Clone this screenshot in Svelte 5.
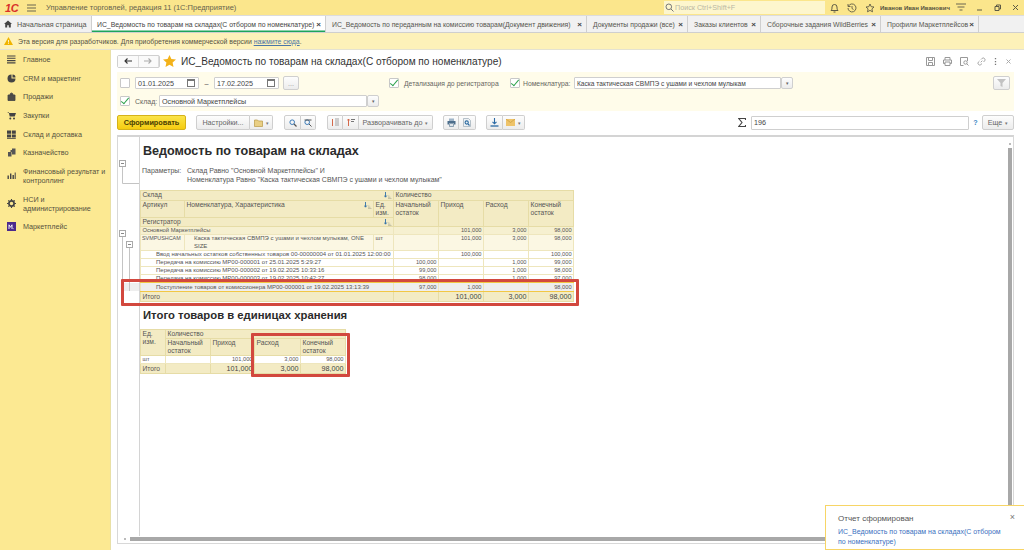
<script>
  const tabs = [
    { name: 'ИС_Ведомость по товарам на складах(С отбором по номенклатуре)', width: 234, active: true },
    { name: 'ИС_Ведомость по переданным на комиссию товарам(Документ движения)', width: 261 },
    { name: 'Документы продажи (все)', width: 101 },
    { name: 'Заказы клиентов', width: 73 },
    { name: 'Сборочные задания WildBerries', width: 120 },
    { name: 'Профили Маркетплейсов', width: 98 }
  ];
  const menu = [
    { id: 'main', lines: ['Главное'] },
    { id: 'crm', lines: ['CRM и маркетинг'] },
    { id: 'sales', lines: ['Продажи'] },
    { id: 'buy', lines: ['Закупки'] },
    { id: 'stock', lines: ['Склад и доставка'] },
    { id: 'cash', lines: ['Казначейство'] },
    { id: 'fin', lines: ['Финансовый результат и', 'контроллинг'] },
    { id: 'nsi', lines: ['НСИ и', 'администрирование'] },
    { id: 'mp', lines: ['Маркетплейс'] }
  ];
  const moves = [
    { name: 'Ввод начальных остатков собственных товаров 00-00000004 от 01.01.2025 12:00:00', start: '', inc: '100,000', out: '', end: '100,000' },
    { name: 'Передача на комиссию МР00-000001 от 25.01.2025 5:29:27', start: '100,000', inc: '', out: '1,000', end: '99,000' },
    { name: 'Передача на комиссию МР00-000002 от 19.02.2025 10:33:16', start: '99,000', inc: '', out: '1,000', end: '98,000' },
    { name: 'Передача на комиссию МР00-000003 от 19.02.2025 10:42:27', start: '98,000', inc: '', out: '1,000', end: '97,000' }
  ];
</script>

{#snippet sortIcon()}
  <svg class="sort" width="8" height="7" viewBox="0 0 8 7"><path d="M1.500 0v5M.2 3.500l1.300 1.700 1.300-1.700" fill="none" stroke="#2f6fa8" stroke-width=".9"/><path d="M4 4h1.500M4 5.300h2.500M4 6.500h3.500" stroke="#b5b39a" stroke-width=".7"/></svg>
{/snippet}

<div class="page">
  <header class="titlebar">
    <span class="logo">1С</span>
    <svg class="burger" width="9" height="8" viewBox="0 0 9 8"><path d="M0 1h9M0 4h9M0 7h9" stroke="#6b6750" stroke-width="1"/></svg>
    <span class="apptitle">Управление торговлей, редакция 11 (1С:Предприятие)</span>
    <div class="search">
      <svg width="9" height="9" viewBox="0 0 9 9"><circle cx="3.800" cy="3.800" r="2.800" fill="none" stroke="#777" stroke-width="1"/><path d="M6 6l2.500 2.500" stroke="#777"/></svg>
      <span>Поиск Ctrl+Shift+F</span>
    </div>
    <div class="sysicons">
      <svg width="9" height="10" viewBox="0 0 9 10"><path d="M1 7.500c1-1 1-2 1-3.500a2.500 2.500 0 0 1 5 0c0 1.500 0 2.500 1 3.500zM3.500 9h2" fill="none" stroke="#5d5a45"/></svg>
      <svg width="10" height="10" viewBox="0 0 10 10"><path d="M1.500 3a4 4 0 1 1-.5 2M1 1v2.500h2.500M5 3v2.500l1.500 1" fill="none" stroke="#5d5a45" stroke-width=".9"/></svg>
      <svg width="10" height="10" viewBox="0 0 10 10"><path d="M5 1l1.200 2.700 2.800.3-2.100 1.900.6 2.900L5 7.400 2.500 8.800l.6-2.900L1 4l2.800-.3z" fill="none" stroke="#5d5a45" stroke-width=".9"/></svg>
      <span class="user">Иванов Иван Иванович</span>
      <svg width="10" height="9" viewBox="0 0 10 9"><path d="M0 1h10M1.500 4h7M3.500 7h3" stroke="#6b6750"/></svg>
      <span class="winbtns">
        <svg width="7" height="7" viewBox="0 0 7 7"><path d="M1 6h5" stroke="#5d5a45"/></svg>
        <svg width="7" height="7" viewBox="0 0 7 7"><path d="M1 2.500h4v4H1zM2.500 2.500V1h4v4H5" fill="none" stroke="#5d5a45"/></svg>
        <svg width="7" height="7" viewBox="0 0 7 7"><path d="M1 1l5 5M6 1L1 6" stroke="#5d5a45"/></svg>
      </span>
    </div>
  </header>

  <nav class="tabs">
    <div class="tab home" style="width:92px">
      <svg width="8" height="8" viewBox="0 0 8 8"><path d="M4 .5L0 4h1.200v3.500h2V5.200h1.600v2.300h2V4H8z" fill="#444"/></svg>
      <span>Начальная страница</span>
    </div>
    {#each tabs as tab}
      <div class="tab" class:active={tab.active} style="width:{tab.width}px">
        <span>{tab.name}</span><b class="x">×</b>
      </div>
    {/each}
  </nav>

  <div class="notice">
    <svg width="9" height="8" viewBox="0 0 9 8"><path d="M4.500 0L9 8H0z" fill="#f0b400"/><path d="M4.500 3v2.500M4.500 6.200v.8" stroke="#fff" stroke-width=".8"/></svg>
    <span>Эта версия для разработчиков. Для приобретения коммерческой версии <a href="#top">нажмите сюда</a>.</span>
  </div>

  <div class="body">
    <aside class="sidebar">
      {#each menu as item}
        <div class="menuitem">
          <svg class="micon" width="9" height="9" viewBox="0 0 9 9">
            {#if item.id === 'main'}
              <path d="M0 1h8.500M0 3.300h8.500M0 5.600h8.500M0 7.900h8.500" stroke="#444" stroke-width="1.100"/>
            {:else if item.id === 'crm'}
              <path d="M4.500 .5a4 4 0 1 0 4 4h-4z" fill="#444"/><path d="M5.500 .5a3 3 0 0 1 3 3h-3z" fill="#444"/>
            {:else if item.id === 'sales'}
              <path d="M1 3h7v5.500H1zM3 3a1.500 2 0 0 1 3 0" fill="#444" stroke="#444" stroke-width=".8" fill-opacity=".95"/>
            {:else if item.id === 'buy'}
              <path d="M0 1h1.700l1 4.500h5L9 2H2.300z" fill="#444"/><circle cx="3.300" cy="7.500" r="1" fill="#444"/><circle cx="7" cy="7.500" r="1" fill="#444"/>
            {:else if item.id === 'stock'}
              <path d="M0 .5h4v3.300H0zM4.800.5h4v3.300h-4zM0 4.500h4v3H0zM4.800 4.500h4v3h-4z" fill="#444"/><path d="M0 8.500h8.800" stroke="#444" stroke-width=".8"/>
            {:else if item.id === 'cash'}
              <path d="M1 4h3.500v4.500H1zM3.500 2h3v2h-3zM5 .5h3.500v6H5z" fill="#555"/>
            {:else if item.id === 'fin'}
              <path d="M.5 4.500h1.400V8H.5zM3 2.500h1.400V8H3zM5.500 4h1.400v4H5.500zM7.700 1.500h1V8h-1z" fill="#444"/>
            {:else if item.id === 'nsi'}
              <circle cx="4.500" cy="4.500" r="2.600" fill="none" stroke="#444" stroke-width="1.700"/><path d="M4.500 0v1.500M4.500 7.500V9M0 4.500h1.500M7.500 4.500H9M1.300 1.300l1 1M6.700 6.700l1 1M7.700 1.300l-1 1M2.300 6.700l-1 1" stroke="#444" stroke-width="1.100"/>
            {:else}
              <rect width="9" height="9" fill="#4b2a8c"/><path d="M2 7V2.800l1.500 2.500L5 2.800V7M6.300 6.500v.6" stroke="#fff" stroke-width=".9" fill="none"/>
            {/if}
          </svg>
          <span class="mtext">
            {#each item.lines as line}
              <span>{line}</span>
            {/each}
          </span>
        </div>
      {/each}
    </aside>

    <main class="content">
      <div class="formhead">
        <div class="navbtns">
          <button class="nb"><svg width="8" height="6" viewBox="0 0 8 6"><path d="M8 3H1.500M3.500 .5L1 3l2.500 2.500" fill="none" stroke="#333" stroke-width="1.100"/></svg></button>
          <button class="nb"><svg width="8" height="6" viewBox="0 0 8 6"><path d="M0 3h6.500M4.500 .5L7 3 4.500 5.500" fill="none" stroke="#aaa" stroke-width="1.100"/></svg></button>
        </div>
        <svg class="star" width="13" height="12" viewBox="0 0 13 12"><path d="M6.500 0l1.900 4 4.600.5-3.400 3 .9 4.500-4-2.300L2.500 12l.9-4.500L0 4.500 4.600 4z" fill="#f3b21a"/></svg>
        <h1>ИС_Ведомость по товарам на складах(С отбором по номенклатуре)</h1>
        <div class="formicons">
          <svg width="9" height="9" viewBox="0 0 9 9"><path d="M.5.500h8v8h-8zM2.500.500v3h4v-3M2.500 8.500v-3h4v3" fill="none" stroke="#999"/></svg>
          <svg width="9" height="9" viewBox="0 0 9 9"><path d="M2 3V.5h5V3M2 6.500H.5V3h8v3.500H7M2 5h5v3.500H2z" fill="none" stroke="#999"/></svg>
          <svg width="9" height="9" viewBox="0 0 9 9"><path d="M7.500 4V.5h-7v8h3" fill="none" stroke="#999"/><circle cx="5.500" cy="5.500" r="1.700" fill="none" stroke="#999"/><path d="M6.700 6.700l1.800 1.800" stroke="#999"/></svg>
          <svg width="9" height="9" viewBox="0 0 9 9"><path d="M3.700 5.300l1.600-1.600M4 2.500l1.200-1.200a1.800 1.800 0 0 1 2.500 2.500L6.500 5M5 6.500L3.800 7.700a1.800 1.800 0 0 1-2.500-2.500L2.500 4" fill="none" stroke="#999" stroke-width=".9"/></svg>
          <svg width="3" height="9" viewBox="0 0 3 9"><path d="M1.500 1v1.300M1.500 3.900v1.300M1.500 6.700V8" stroke="#777" stroke-width="1.300"/></svg>
          <svg width="7" height="7" viewBox="0 0 7 7"><path d="M1.500 1.500l4 4M5.500 1.500l-4 4" stroke="#aaa"/></svg>
        </div>
      </div>

      <section class="filters">
        <div class="frow r1">
          <span class="cb"></span>
          <div class="input date"><span>01.01.2025</span><i class="cal"></i></div>
          <span class="dash">–</span>
          <div class="input date"><span>17.02.2025</span><i class="cal"></i></div>
          <button class="btn dots">...</button>
          <span class="cb on det"></span>
          <span class="lbl detl">Детализация до регистратора</span>
          <span class="cb on tight"></span>
          <span class="lbl noml">Номенклатура:</span>
          <div class="input nom"><span>Каска тактическая СВМПЭ с ушами и чехлом мулыкам</span></div>
          <button class="btn dd">▾</button>
          <button class="btn funnel"><svg width="9" height="8" viewBox="0 0 9 8"><path d="M0 0h9L5.500 4v4L3.500 7V4z" fill="#c2c2c2"/></svg></button>
        </div>
        <div class="frow r2">
          <span class="cb on"></span>
          <span class="lbl skl">Склад:</span>
          <div class="input wh"><span>Основной Маркетплейсы</span></div>
          <button class="btn dd">▾</button>
        </div>
      </section>

      <div class="toolbar">
        <button class="btn primary">Сформировать</button>
        <div class="group g1">
          <button class="btn set">Настройки...</button>
          <button class="btn ic w23"><svg width="9" height="9" viewBox="0 0 9 9"><path d="M.5 2h3l1 1h4v5.500h-8z" fill="#e9cf85" stroke="#b99a45" stroke-width=".7"/></svg><em>▾</em></button>
        </div>
        <div class="group g2">
          <button class="btn ic w17"><svg width="8" height="8" viewBox="0 0 8 8"><circle cx="3.200" cy="3.200" r="2.300" fill="none" stroke="#3a7ab8"/><path d="M5 5l2.500 2.500" stroke="#555" stroke-width="1.200"/></svg></button>
          <button class="btn ic w15"><svg width="8" height="8" viewBox="0 0 8 8"><circle cx="3.200" cy="3.200" r="2.300" fill="none" stroke="#3a7ab8"/><path d="M5 5l2.500 2.500M.5 1h7" stroke="#555"/></svg></button>
        </div>
        <div class="group g3">
          <button class="btn ic w13"><svg width="8" height="9" viewBox="0 0 8 9"><path d="M1.500 1v7" stroke="#d4694a"/><path d="M4 1h4M4 3h4M4 5h4M4 7h4" stroke="#999" stroke-width=".9"/></svg></button>
          <button class="btn ic w13"><svg width="8" height="9" viewBox="0 0 8 9"><path d="M1.500 8V1M.2 2.500L1.500 1l1.300 1.500" fill="none" stroke="#d4694a"/><path d="M4 1.500h4M4 3.500h3" stroke="#777"/></svg></button>
          <button class="btn exp">Разворачивать до<em>▾</em></button>
        </div>
        <div class="group g4">
          <button class="btn ic w16"><svg width="9" height="9" viewBox="0 0 9 9"><path d="M2 3V.5h5V3z" fill="#9fb4c8"/><path d="M.5 3h8v3.500H7V5H2v1.500H.5z" fill="#4d6e8c"/><path d="M2.500 5.500h4v3h-4z" fill="#dfe5ea" stroke="#4d6e8c" stroke-width=".6"/></svg></button>
          <button class="btn ic w17"><svg width="8" height="9" viewBox="0 0 8 9"><path d="M.5.500h5l2 2v6h-7z" fill="#eef2f5" stroke="#9aa9b5" stroke-width=".7"/><circle cx="3.700" cy="4.500" r="1.600" fill="none" stroke="#2c6aa0" stroke-width="1.100"/><path d="M5 6l1.500 1.500" stroke="#2c6aa0" stroke-width="1.100"/></svg></button>
        </div>
        <div class="group g5">
          <button class="btn ic w17"><svg width="9" height="9" viewBox="0 0 9 9"><path d="M4.500 0v5.500M2.500 3.800l2 2 2-2" fill="none" stroke="#2a6aa5" stroke-width="1.100"/><path d="M.5 8h8" stroke="#2a6aa5" stroke-width="1.300"/></svg></button>
          <button class="btn ic w22"><svg width="9" height="7" viewBox="0 0 9 7"><rect width="9" height="7" fill="#eec36a"/><path d="M0 0l4.500 3.500L9 0" fill="none" stroke="#c99b3a" stroke-width=".7"/></svg><em>▾</em></button>
        </div>
        <svg class="sigma" width="8" height="9" viewBox="0 0 8 9"><path d="M7.500 2V.5H.8l3.200 4-3.200 4h6.700V7" fill="none" stroke="#444" stroke-width="1.100"/></svg>
        <div class="input sum"><span>196</span></div>
        <span class="q">?</span>
        <button class="btn more">Еще<em>▾</em></button>
      </div>

      <div class="report">
        <svg class="gutter" width="22" height="401" viewBox="0 0 22 401">
          <rect x="4" y="146" width="18" height="8" fill="#eee"/>
          <path d="M21.500 0V399" stroke="#d4d4d4"/>
          <path d="M4.500 29v17.500H21" fill="none" stroke="#c4c4c4"/>
          <rect x="1.500" y="23.500" width="6" height="6" fill="#fff" stroke="#aaa"/><path d="M3 26.500h3" stroke="#888"/>
          <path d="M4.500 99v55" stroke="#c4c4c4"/>
          <rect x="1.500" y="93.500" width="6" height="6" fill="#fff" stroke="#aaa"/><path d="M3 96.500h3" stroke="#888"/>
          <path d="M11.500 110v44" stroke="#c4c4c4"/>
          <rect x="8.500" y="104.500" width="6" height="6" fill="#fff" stroke="#aaa"/><path d="M10 107.500h3" stroke="#888"/>
        </svg>
        <div class="sheet">
          <h2 class="h-main">Ведомость по товарам на складах</h2>
          <div class="params">
            <span>Параметры:</span>
            <div>Склад Равно "Основной Маркетплейсы" И<br>Номенклатура Равно "Каска тактическая СВМПЭ с ушами и чехлом мулыкам"</div>
          </div>

          <div class="tablewrap">
            <table class="grid big">
              <colgroup><col style="width:44px"><col style="width:189px"><col style="width:20px"><col style="width:45px"><col style="width:45px"><col style="width:45px"><col style="width:45px"></colgroup>
              <tbody>
                <tr class="hd h11"><td colspan="3" class="sorted">Склад{@render sortIcon()}</td><td colspan="4">Количество</td></tr>
                <tr class="hd h17">
                  <td>Артикул</td><td class="sorted">Номенклатура, Характеристика{@render sortIcon()}</td><td>Ед. изм.</td>
                  <td rowspan="2">Начальный остаток</td><td rowspan="2">Приход</td><td rowspan="2">Расход</td><td rowspan="2">Конечный остаток</td>
                </tr>
                <tr class="hd h10"><td colspan="3" class="sorted">Регистратор{@render sortIcon()}</td></tr>
                <tr class="group1"><td colspan="3">Основной Маркетплейсы</td><td></td><td class="n">101,000</td><td class="n">3,000</td><td class="n">98,000</td></tr>
                <tr class="group2">
                  <td class="sku">SVMPUSHCAM</td><td class="ind">Каска тактическая СВМПЭ с ушами и чехлом мулыкам, ONE SIZE</td><td>шт</td>
                  <td></td><td class="n">101,000</td><td class="n">3,000</td><td class="n">98,000</td>
                </tr>
                {#each moves as m}
                  <tr class="move">
                    <td colspan="3" class="mname">{m.name}</td>
                    <td class="n">{m.start}</td><td class="n">{m.inc}</td><td class="n">{m.out}</td><td class="n">{m.end}</td>
                  </tr>
                {/each}
                <tr class="move current">
                  <td colspan="3" class="mname">Поступление товаров от комиссионера МР00-000001 от 19.02.2025 13:13:39</td>
                  <td class="n">97,000</td><td class="n">1,000</td><td class="n"></td><td class="n">98,000</td>
                </tr>
                <tr class="total"><td colspan="3">Итого</td><td></td><td class="n">101,000</td><td class="n">3,000</td><td class="n">98,000</td></tr>
              </tbody>
            </table>
            <div class="redbox rb1"></div>
          </div>

          <h2 class="h-sub">Итого товаров в единицах хранения</h2>
          <div class="tablewrap">
            <table class="grid small">
              <colgroup><col style="width:25px"><col style="width:45px"><col style="width:44px"><col style="width:46px"><col style="width:45px"></colgroup>
              <tbody>
                <tr class="hd h9"><td rowspan="2">Ед. изм.</td><td colspan="4">Количество</td></tr>
                <tr class="hd h18"><td>Начальный остаток</td><td>Приход</td><td>Расход</td><td>Конечный остаток</td></tr>
                <tr class="unit"><td>шт</td><td></td><td class="n">101,000</td><td class="n">3,000</td><td class="n">98,000</td></tr>
                <tr class="total"><td>Итого</td><td></td><td class="n">101,000</td><td class="n">3,000</td><td class="n">98,000</td></tr>
              </tbody>
            </table>
            <div class="redbox rb2"></div>
          </div>
        </div>
        <div class="vscroll"><span class="arrow"></span><span class="thumb"></span></div>
        <div class="hscroll"><span class="arrow"></span><span class="thumb"></span></div>
      </div>
    </main>
  </div>

  <aside class="toast">
    <div class="toast-title">Отчет сформирован</div>
    <a class="toast-link" href="#top">ИС_Ведомость по товарам на складах(С отбором по номенклатуре)</a>
    <span class="toast-x">×</span>
  </aside>
</div>

<style>
  :global(body) {
    margin: 0;
    font-family: "Liberation Sans", Arial, sans-serif;
    color: #444;
  }
  .page {
    width: 1024px;
    height: 550px;
    position: relative;
    overflow: hidden;
    display: flex;
    flex-direction: column;
    background: #fff;
    font-size: 7.2px;
  }
  svg {
    display: block;
    flex: none;
  }
  button {
    font-family: inherit;
    padding: 0;
    margin: 0;
  }

  /* top bar */
  .titlebar {
    height: 15px;
    flex: none;
    display: flex;
    align-items: center;
    background: #fbe68c;
  }
  .logo {
    width: 22px;
    margin-left: 5px;
    color: #d8322a;
    font-weight: bold;
    font-style: italic;
    font-size: 11px;
    letter-spacing: -.3px;
  }
  .burger {
    margin-right: 10px;
  }
  .apptitle {
    width: 618px;
    color: #66634e;
    font-size: 7.5px;
  }
  .search {
    width: 161px;
    height: 13px;
    display: flex;
    align-items: center;
    gap: 1px;
    padding-left: 1px;
    box-sizing: border-box;
    background: #fdf6cd;
    color: #b9b7a4;
  }
  .sysicons {
    display: flex;
    align-items: center;
    margin-left: 5px;
    gap: 8px;
  }
  .user {
    margin-left: -3px;
    margin-right: -2px;
    font-size: 6px;
    width: 70px;
    white-space: nowrap;
    color: #55523f;
    font-weight: bold;
  }
  .winbtns {
    display: flex;
    gap: 11px;
    margin-left: 2px;
  }

  /* tabs */
  .tabs {
    height: 18px;
    flex: none;
    display: flex;
    background: #f1f1f1;
    border-top: 1px solid #dcdcdc;
    border-bottom: 1px solid #cfcfcf;
    box-sizing: border-box;
  }
  .tab {
    flex: none;
    box-sizing: border-box;
    display: flex;
    align-items: center;
    justify-content: space-between;
    padding: 0 4px 0 6px;
    border-right: 1px solid #cfcfcf;
    white-space: nowrap;
    overflow: hidden;
    color: #55554f;
    font-size: 6.85px;
  }
  .tab.home {
    justify-content: flex-start;
    gap: 5px;
    padding-left: 4px;
    font-size: 7.2px;
  }
  .tab.active {
    background: #fff;
    color: #444;
    box-shadow: inset 0 -1.5px 0 #1da45a;
    padding-left: 5px;
  }
  .x {
    font-size: 8px;
    color: #444;
    font-weight: bold;
  }

  /* licence strip */
  .notice {
    height: 17px;
    flex: none;
    display: flex;
    align-items: center;
    gap: 5px;
    padding-left: 4px;
    box-sizing: border-box;
    background: #fdf1b9;
    border-bottom: 1px solid #e4e2d2;
    color: #55523f;
    font-size: 6.9px;
  }
  .notice a {
    color: #4a76a8;
  }

  /* side menu */
  .body {
    flex: 1;
    display: flex;
    min-height: 0;
  }
  .sidebar {
    width: 111px;
    flex: none;
    box-sizing: border-box;
    background: #fce992;
    border-right: 1px solid #e9e0a6;
  }
  .menuitem {
    display: flex;
    align-items: center;
    padding: 4.85px 2px 4.85px 7px;
    gap: 7px;
    line-height: 9px;
    color: #55523f;
    font-size: 7.2px;
  }
  .mtext {
    display: flex;
    flex-direction: column;
    white-space: nowrap;
  }

  /* form */
  .content {
    flex: 1;
    min-width: 0;
    padding: 4px 10px 6px 6px;
    box-sizing: border-box;
    display: flex;
    flex-direction: column;
  }
  .formhead {
    height: 14px;
    flex: none;
    display: flex;
    align-items: center;
  }
  .navbtns {
    display: flex;
    width: 43px;
    height: 13px;
    margin-right: 3px;
    border: 1px solid #d0d0d0;
    box-sizing: border-box;
    border-radius: 2px;
  }
  .nb {
    flex: 1;
    display: flex;
    align-items: center;
    justify-content: center;
    background: #fafafa;
    border: 0;
    border-right: 1px solid #ddd;
  }
  .star {
    margin-right: 5px;
  }
  h1 {
    margin: 0;
    font-weight: normal;
    font-size: 10.1px;
    color: #333;
    white-space: nowrap;
    flex: 1;
  }
  .formicons {
    display: flex;
    align-items: center;
    gap: 8px;
    padding-right: 2px;
  }
  .filters {
    height: 39px;
    flex: none;
    margin-top: 4px;
    background: #fffcea;
    box-sizing: border-box;
    padding: 5px 3px 0 3px;
  }
  .frow {
    display: flex;
    align-items: center;
    height: 12px;
  }
  .r2 {
    margin-top: 6px;
  }
  .cb {
    width: 8px;
    height: 8px;
    flex: none;
    border: 1px solid #c8c8c8;
    background: #fff;
    border-radius: 1px;
    position: relative;
    margin-right: 5px;
  }
  .cb.tight {
    margin-right: 3px;
  }
  .cb.on::after {
    content: "";
    position: absolute;
    left: 2px;
    top: -1px;
    width: 3px;
    height: 7px;
    border: solid #2da24c;
    border-width: 0 1.6px 1.6px 0;
    transform: rotate(40deg);
  }
  .input {
    height: 12px;
    box-sizing: border-box;
    flex: none;
    display: flex;
    align-items: center;
    justify-content: space-between;
    background: #fff;
    border: 1px solid #cfcfcf;
    padding-left: 2px;
    color: #444;
    border-radius: 1px;
    font-size: 7.2px;
    white-space: nowrap;
    overflow: hidden;
  }
  .date {
    width: 64px;
  }
  .date:nth-child(4) {
    width: 65px;
  }
  .cal {
    width: 6px;
    height: 5px;
    margin-right: 3px;
    border: 1px solid #777;
    border-top-width: 2px;
  }
  .dash {
    width: 15px;
    text-align: center;
  }
  .btn {
    background: linear-gradient(#fdfdfd, #ececec);
    border: 1px solid #cfcfcf;
    border-radius: 2px;
    box-sizing: border-box;
    color: #666;
    font-size: 7.2px;
    display: flex;
    align-items: center;
    justify-content: center;
    flex: none;
  }
  .btn em {
    font-style: normal;
    font-size: 5px;
    color: #777;
    margin-left: 3px;
  }
  .dots {
    width: 16px;
    height: 14px;
    margin-left: 4px;
    color: #999;
  }
  .det {
    margin-left: 90px;
  }
  .lbl {
    color: #66665f;
    white-space: nowrap;
  }
  .detl {
    width: 106px;
    font-size: 6.8px;
  }
  .noml {
    width: 51px;
    font-size: 6.8px;
  }
  .nom {
    width: 207px;
    font-size: 6.6px;
  }
  .dd {
    width: 12px;
    height: 12px;
    font-size: 5px;
  }
  .funnel {
    width: 17px;
    height: 14px;
    margin-left: auto;
    margin-right: 1px;
  }
  .skl {
    width: 24px;
    font-size: 7px;
  }
  .wh {
    width: 208px;
  }

  /* report commands */
  .toolbar {
    height: 15px;
    flex: none;
    margin-top: 4px;
    display: flex;
    align-items: center;
  }
  .toolbar .btn {
    height: 15px;
  }
  .primary {
    width: 69px;
    background: linear-gradient(#fbe44a, #f5cc10);
    border-color: #d5b21a;
    color: #4a3d00;
    font-weight: bold;
    font-size: 7.3px;
  }
  .group {
    display: flex;
    flex: none;
  }
  .group .btn {
    border-radius: 0;
    border-left-width: 0;
  }
  .group .btn:first-child {
    border-left-width: 1px;
    border-radius: 2px 0 0 2px;
  }
  .group .btn:last-child {
    border-radius: 0 2px 2px 0;
  }
  .g1 {
    margin-left: 10px;
  }
  .g2,
  .g3 {
    margin-left: 11px;
  }
  .g4,
  .g5 {
    margin-left: 10px;
  }
  .set {
    width: 54px;
  }
  .w13 { width: 16px; }
  .w15 { width: 15px; }
  .w16 { width: 16px; }
  .w17 { width: 17px; }
  .w22 { width: 22px; }
  .w23 { width: 23px; }
  .exp {
    width: 74px;
  }
  .sigma {
    margin-left: 213px;
  }
  .sum {
    width: 218px;
    height: 14px;
    margin-left: 5px;
  }
  .q {
    width: 14px;
    text-align: center;
    color: #3d87c4;
    font-weight: bold;
  }
  .more {
    width: 32px;
  }

  /* report sheet */
  .report {
    flex: 1;
    min-height: 0;
    margin-top: 5px;
    position: relative;
    display: flex;
    border: 1px solid #d8d8d8;
    border-top: 2px solid #d4d4d4;
    box-sizing: border-box;
    overflow: hidden;
  }
  .sheet {
    flex: 1;
    min-width: 0;
  }
  .h-main {
    margin: 7px 0 0 3px;
    font-size: 12.6px;
    line-height: 15px;
    color: #2b2b2b;
    font-weight: bold;
  }
  .params {
    display: flex;
    margin: 8px 0 0 2px;
    font-size: 7px;
    line-height: 8.5px;
    color: #555;
    height: 23px;
  }
  .params > span {
    width: 45px;
    flex: none;
  }
  .tablewrap {
    position: relative;
  }
  .grid {
    border-collapse: collapse;
    table-layout: fixed;
    font-size: 6.7px;
    color: #555;
  }
  .big {
    width: 433px;
  }
  .small {
    width: 205px;
  }
  .grid td {
    border: 1px solid #eee6bd;
    padding: 0 1.5px;
    overflow: hidden;
    vertical-align: top;
    line-height: 8px;
  }
  .hd td {
    background: #f3ebc4;
    border-color: #e6dca6;
    line-height: 8px;
  }
  .sorted {
    position: relative;
  }
  .sort {
    position: absolute;
    right: 1px;
    top: 1px;
  }
  .h11 { height: 10px; }
  .h17 { height: 17px; }
  .h10 { height: 9px; }
  .h9 { height: 8px; }
  .h18 { height: 17px; }
  .n {
    text-align: right;
    font-size: 5.7px;
  }
  .group1 td {
    background: #f6f0d0;
    font-size: 5.8px;
    height: 7px;
    line-height: 7px;
  }
  .group1 .n { font-size: 5.7px; }
  .group2 td {
    background: #fbf7e3;
    font-size: 6px;
    line-height: 7.5px;
    height: 15px;
  }
  .group2 .n { font-size: 5.7px; }
  .group2 .sku {
    font-size: 5.4px;
    padding: 0 1px;
    white-space: nowrap;
  }
  .ind {
    padding-left: 9px !important;
  }
  .move td {
    background: #fff;
    height: 7px;
    line-height: 7px;
    font-size: 6px;
    white-space: nowrap;
  }
  .move .n { font-size: 5.7px; }
  .mname {
    padding-left: 15px !important;
  }
  .move:has(+ .current) td {
    border-bottom-color: #f2c744;
  }
  .current td {
    background: #eee;
    height: 8px;
    line-height: 8px;
    border-top: 1px solid #f2c744;
    border-bottom: 1px solid #f2c744;
  }
  .total td {
    background: #f3ebc4;
    border-color: #e6dca6;
    height: 9px;
    line-height: 9px;
    font-size: 6.7px;
  }
  .total .n {
    font-size: 7.2px;
    color: #444;
  }
  .unit td {
    background: #fff;
    font-size: 5.5px;
    height: 7px;
    line-height: 7px;
  }
  .unit .n { font-size: 5.7px; }
  .redbox {
    position: absolute;
    box-sizing: border-box;
    border: 3px solid #d2483e;
    border-radius: 1px;
    pointer-events: none;
  }
  .rb1 {
    left: -19px;
    top: 89px;
    width: 458px;
    height: 27px;
  }
  .rb2 {
    left: 111px;
    top: 4px;
    width: 99px;
    height: 44px;
  }
  .h-sub {
    margin: 6px 0 6px 3px;
    font-size: 11.3px;
    line-height: 15px;
    color: #2b2b2b;
    font-weight: bold;
  }
  .vscroll {
    position: absolute;
    right: 1px;
    top: 6px;
    bottom: 14px;
    width: 4px;
  }
  .vscroll .arrow,
  .hscroll .arrow {
    display: block;
    position: absolute;
    width: 2px;
    height: 2px;
    background: #bbb;
  }
  .vscroll .arrow { left: 1px; top: 0; }
  .vscroll .thumb {
    position: absolute;
    top: 5px;
    bottom: 0;
    left: 0;
    width: 4px;
    background: #a8a8a8;
  }
  .hscroll {
    position: absolute;
    left: 6px;
    right: 8px;
    bottom: 2px;
    height: 4px;
  }
  .hscroll .arrow { left: 0; top: 1px; }
  .hscroll .thumb {
    position: absolute;
    left: 6px;
    right: 0;
    top: 0;
    height: 4px;
    background: #a8a8a8;
  }

  /* notification */
  .toast {
    position: absolute;
    left: 825px;
    top: 505px;
    width: 199px;
    height: 45px;
    box-sizing: border-box;
    padding: 8px 20px 0 12px;
    background: #fff;
    border: 1.5px solid #f7d566;
    border-right: 0;
  }
  .toast-title {
    font-size: 8px;
    line-height: 10px;
    color: #555;
  }
  .toast-link {
    display: block;
    margin-top: 3px;
    font-size: 7px;
    line-height: 10px;
    color: #3a6fc0;
    text-decoration: none;
  }
  .toast-x {
    position: absolute;
    right: 9px;
    top: 6px;
    font-size: 9px;
    color: #777;
  }
</style>
